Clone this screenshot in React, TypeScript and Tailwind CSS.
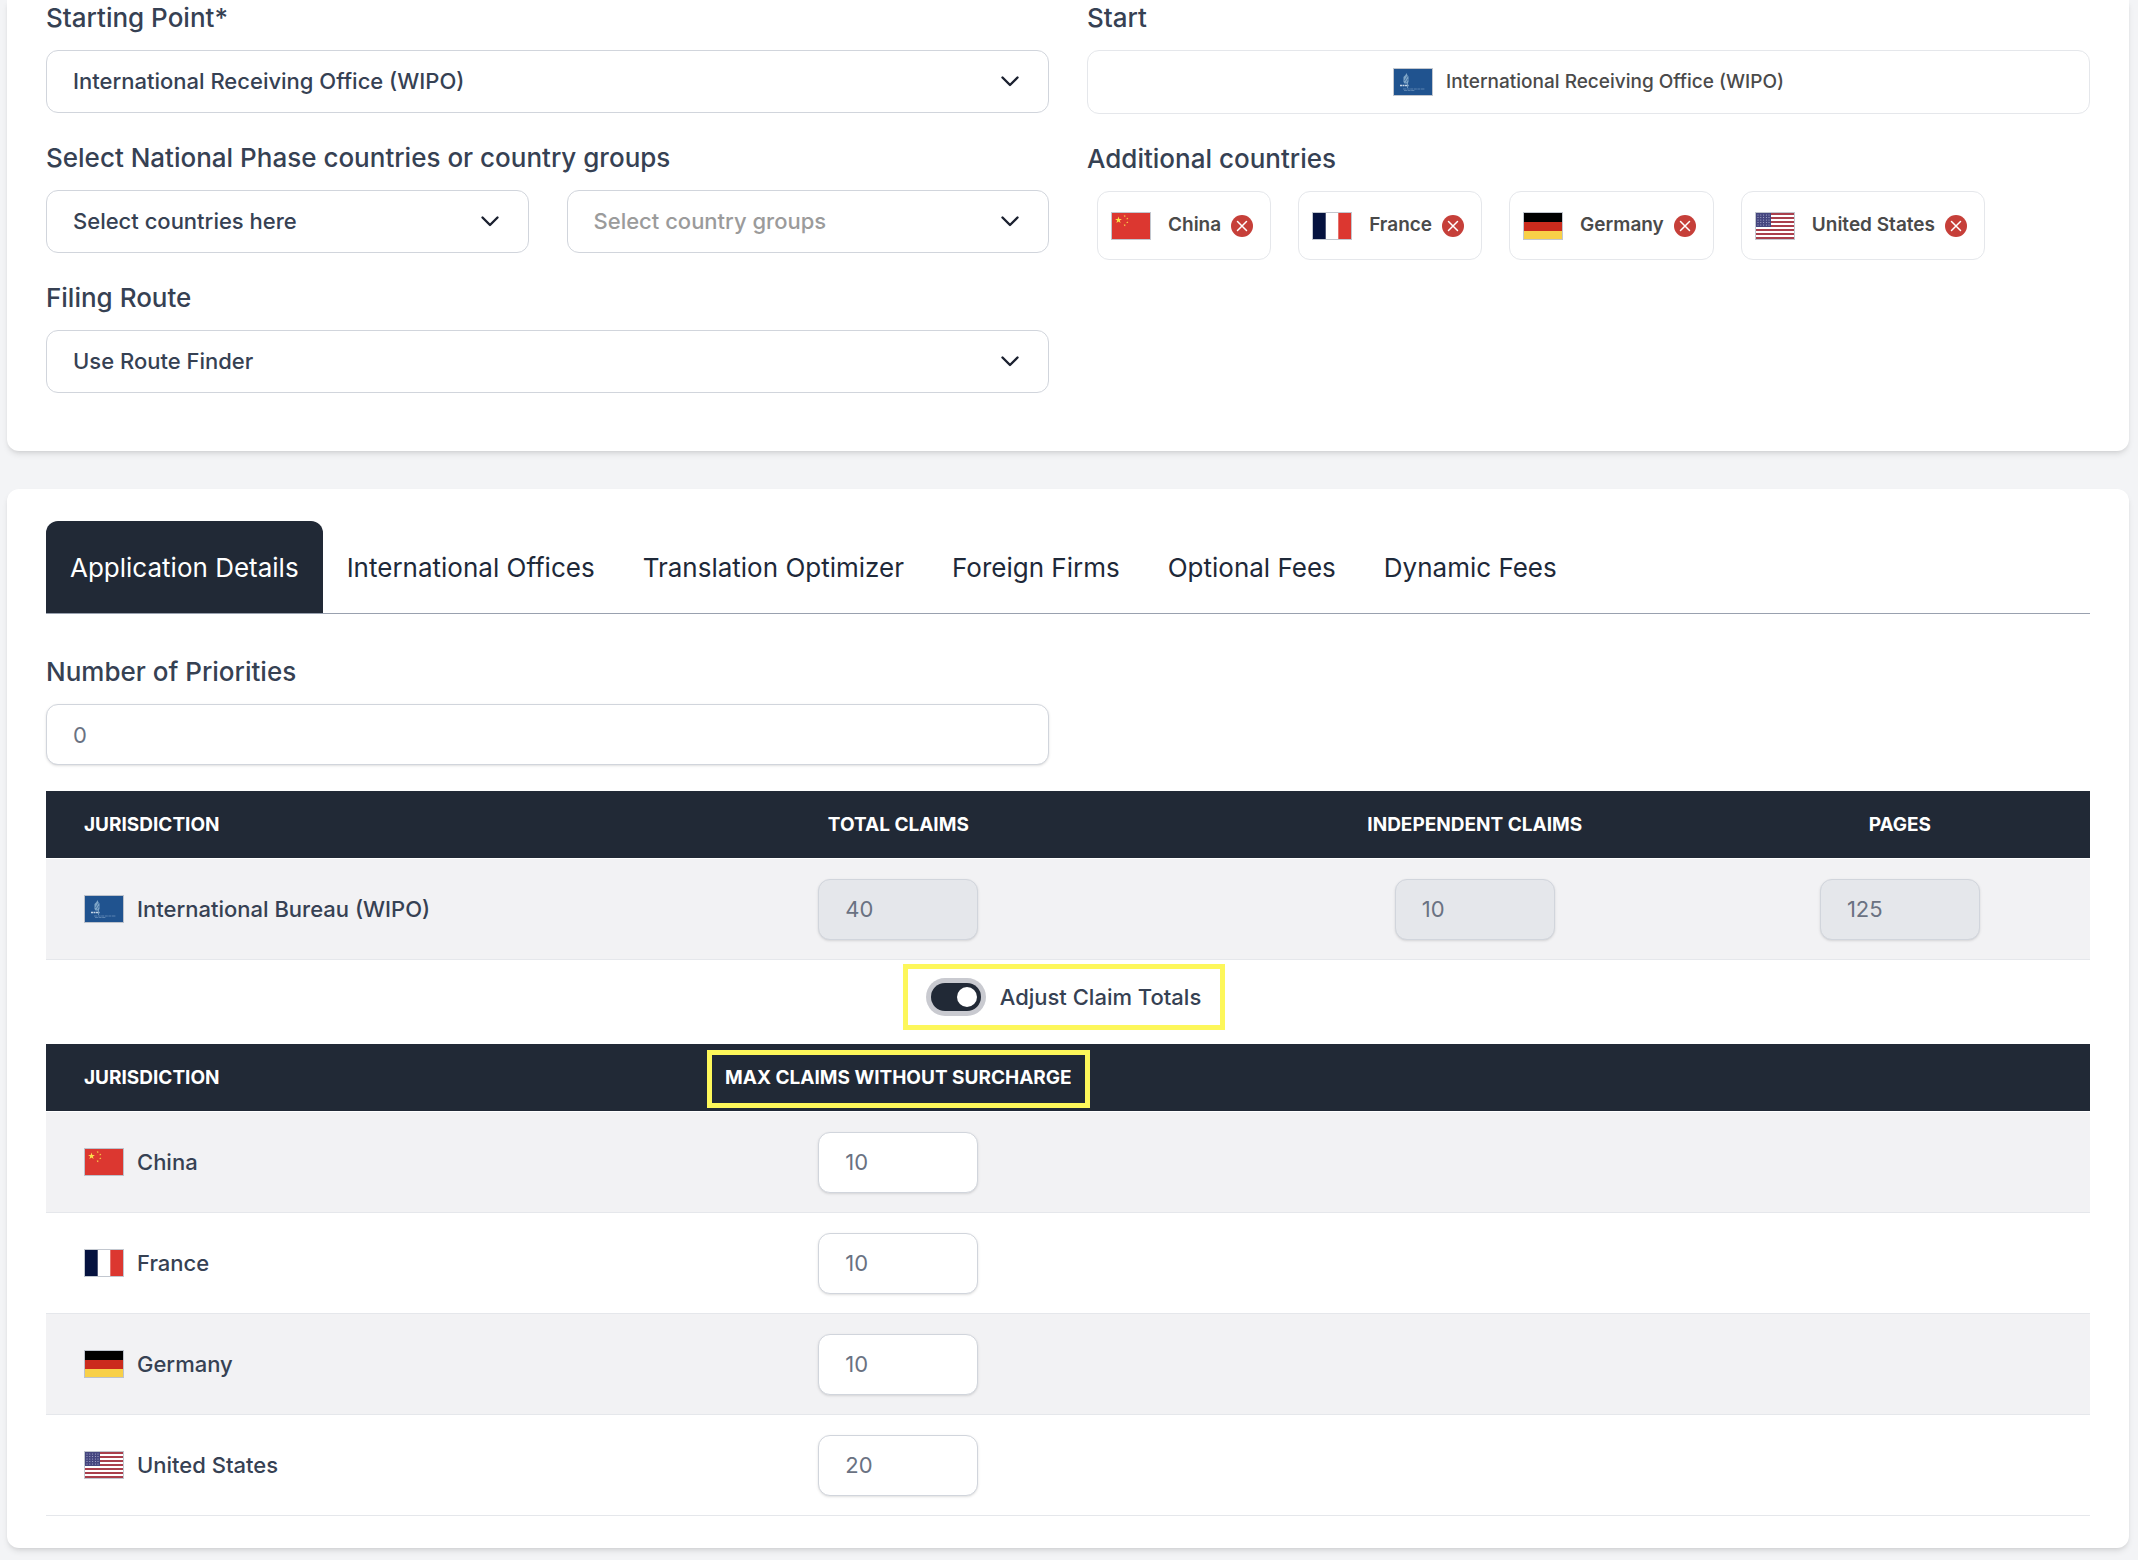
import { useState } from "react";

type CountryCode = "wipo" | "cn" | "fr" | "de" | "us";

interface Country {
  code: CountryCode;
  name: string;
  maxClaims: string;
}

const countries: Country[] = [
  { code: "cn", name: "China", maxClaims: "10" },
  { code: "fr", name: "France", maxClaims: "10" },
  { code: "de", name: "Germany", maxClaims: "10" },
  { code: "us", name: "United States", maxClaims: "20" },
];

const tabs = [
  "Application Details",
  "International Offices",
  "Translation Optimizer",
  "Foreign Firms",
  "Optional Fees",
  "Dynamic Fees",
];

const STAR = "M0 -1L0.225 -0.309L0.951 -0.309L0.363 0.118L0.588 0.809L0 0.382L-0.588 0.809L-0.363 0.118L-0.951 -0.309L-0.225 -0.309Z";

function FlagArt({ code }: { code: CountryCode }) {
  switch (code) {
    case "cn":
      return (
        <>
          <rect width="38" height="26" fill="#dc3730" />
          <g fill="#fbe14b">
            <path d={STAR} transform="translate(6.5 7) scale(3.6)" />
            <path d={STAR} transform="translate(12.7 3) scale(1.2)" />
            <path d={STAR} transform="translate(15.3 5.6) scale(1.2)" />
            <path d={STAR} transform="translate(15.3 9.4) scale(1.2)" />
            <path d={STAR} transform="translate(12.7 12.2) scale(1.2)" />
          </g>
        </>
      );
    case "fr":
      return (
        <>
          <rect width="38" height="26" fill="#fff" />
          <rect width="12.7" height="26" fill="#05123f" />
          <rect x="25.3" width="12.7" height="26" fill="#dc3730" />
        </>
      );
    case "de":
      return (
        <>
          <rect width="38" height="9" fill="#000" />
          <rect y="9" width="38" height="9" fill="#cb2b1d" />
          <rect y="18" width="38" height="8" fill="#f8d048" />
        </>
      );
    case "us":
      return (
        <>
          <rect width="38" height="26" fill="#fff" />
          {[0, 2, 4, 6, 8, 10, 12].map((n) => (
            <rect key={n} y={n * 2} width="38" height="2" fill="#a93f4c" />
          ))}
          <rect width="15" height="14" fill="#45467f" />
          {[2, 4.5, 7, 9.5, 12].map((y) =>
            [2, 4.8, 7.6, 10.4, 13].map((x) => (
              <circle key={`${x}-${y}`} cx={x} cy={y} r="0.55" fill="#b9bad8" />
            ))
          )}
        </>
      );
    default:
      return (
        <>
          <rect width="38" height="26" fill="#20538f" />
          <path d="M9.5 13V8l2-2 1-2 1 2.500 1 1V13l-1 1.500h-3z" fill="#7fa6c8" />
          <path d="M10.500 12l3-5M12 13.500l2-3.500" stroke="#20538f" strokeWidth="0.600" />
          <path d="M6 16.500h8.500" stroke="#c5d6e6" strokeWidth="1.600" strokeDasharray="2 0.500" />
          <path d="M13.500 13v6" stroke="#7fa6c8" strokeWidth="0.800" />
          <path d="M9 20h22M10 21.500h11" stroke="#7297bf" strokeWidth="0.700" strokeDasharray="3 0.600" />
        </>
      );
  }
}

function Flag({ code }: { code: CountryCode }) {
  return (
    <svg
      viewBox="0 0 38 26"
      preserveAspectRatio="none"
      aria-hidden="true"
      className="h-7 w-10 shrink-0 border border-gray-400/60"
    >
      <FlagArt code={code} />
    </svg>
  );
}

interface SelectFieldProps {
  id: string;
  option: string;
  label?: string;
  muted?: boolean;
}

function SelectField({ id, option, label, muted }: SelectFieldProps) {
  return (
    <div className="relative flex-1">
      <select
        id={id}
        aria-label={label}
        className={`block h-[63px] w-full appearance-none rounded-xl border border-gray-300 bg-white px-[26px] text-[22px] font-medium ${
          muted ? "text-[#9b9b9b]" : "text-gray-700"
        }`}
      >
        <option>{option}</option>
      </select>
      <svg
        viewBox="0 0 20 12"
        fill="none"
        aria-hidden="true"
        className="pointer-events-none absolute top-[25px] right-[29px] h-3 w-5"
      >
        <path
          d="M2.500 2.500l7.500 7.500 7.500-7.500"
          stroke="#1b2130"
          strokeWidth="2.400"
          strokeLinecap="round"
          strokeLinejoin="round"
        />
      </svg>
    </div>
  );
}

const labelClass = "block text-[26px] leading-9 font-medium text-gray-700";
const inputClass =
  "block h-[61px] rounded-xl border border-gray-300 px-[26px] text-[22px] text-gray-500 shadow-sm";
const headClass =
  "h-[68px] border-b border-white bg-[#212936] p-0 pt-[2px] text-[19px] font-bold text-white uppercase";
const cellClass = "h-[101px] border-b border-gray-200 p-0";

function Columns() {
  return (
    <colgroup>
      <col className="w-[25%]" />
      <col className="w-[33.4%]" />
      <col className="w-[23%]" />
      <col className="w-[18.6%]" />
    </colgroup>
  );
}

function JurisdictionCell({ code, name }: { code: CountryCode; name: string }) {
  return (
    <td className={cellClass}>
      <div className="flex items-center gap-[13px] pl-[38px] text-[22px] font-medium text-gray-700">
        <Flag code={code} />
        {name}
      </div>
    </td>
  );
}

export default function App() {
  const [activeTab, setActiveTab] = useState(tabs[0]);
  const [selected, setSelected] = useState(countries);
  const [adjustTotals, setAdjustTotals] = useState(true);

  const removeCountry = (code: CountryCode) => {
    setSelected(selected.filter((c) => c.code !== code));
  };

  return (
    <div className="min-h-screen bg-gray-100 pr-[9px] pb-3 pl-[7px] font-[Inter,sans-serif]">
      <section className="grid grid-cols-2 gap-[38px] rounded-b-xl bg-white px-[39px] pb-[58px] shadow-md">
        <div className="space-y-[27px]">
          <div>
            <label htmlFor="starting-point" className={labelClass}>
              Starting Point*
            </label>
            <div className="mt-[14px] flex">
              <SelectField
                id="starting-point"
                option="International Receiving Office (WIPO)"
              />
            </div>
          </div>
          <div>
            <label htmlFor="countries" className={labelClass}>
              Select National Phase countries or country groups
            </label>
            <div className="mt-[14px] flex gap-[38px]">
              <SelectField id="countries" option="Select countries here" />
              <SelectField
                id="country-groups"
                label="Country groups"
                option="Select country groups"
                muted
              />
            </div>
          </div>
          <div>
            <label htmlFor="filing-route" className={labelClass}>
              Filing Route
            </label>
            <div className="mt-[14px] flex">
              <SelectField id="filing-route" option="Use Route Finder" />
            </div>
          </div>
        </div>

        <div className="space-y-[27px]">
          <div>
            <h2 className={labelClass}>Start</h2>
            <div className="mt-[14px] flex h-16 items-center justify-center gap-[13px] rounded-xl border border-gray-200 text-[19px] font-medium text-[#4a4a4a]">
              <Flag code="wipo" />
              International Receiving Office (WIPO)
            </div>
          </div>
          <div>
            <h2 className={labelClass}>Additional countries</h2>
            <ul className="mt-[14px] flex flex-wrap gap-[27px] px-[10px]">
              {selected.map((country) => (
                <li
                  key={country.code}
                  className="flex h-[69px] items-center rounded-xl border border-gray-200 pr-[17px] pl-[13px] text-[19px] font-semibold text-[#4a4a4a]"
                >
                  <Flag code={country.code} />
                  <span className="ml-[17px]">{country.name}</span>
                  <button
                    type="button"
                    aria-label={`Remove ${country.name}`}
                    onClick={() => removeCountry(country.code)}
                    className="ml-[10px]"
                  >
                    <svg viewBox="0 0 22 22" fill="none" className="size-[22px]">
                      <circle cx="11" cy="11" r="11" fill="#c63f39" />
                      <path
                        d="M6.500 6.500l9 9M15.500 6.500l-9 9"
                        stroke="#fff"
                        strokeWidth="1.500"
                        strokeLinecap="round"
                      />
                    </svg>
                  </button>
                </li>
              ))}
            </ul>
          </div>
        </div>
      </section>

      <section className="mt-[38px] rounded-xl bg-white px-[39px] py-8 shadow-md">
        <div role="tablist" className="flex border-b border-gray-400">
          {tabs.map((tab) => (
            <button
              key={tab}
              type="button"
              role="tab"
              aria-selected={tab === activeTab}
              onClick={() => setActiveTab(tab)}
              className={`h-[92px] rounded-t-xl px-6 text-[26px] ${
                tab === activeTab ? "bg-[#212936] text-white" : "text-gray-800"
              }`}
            >
              {tab}
            </button>
          ))}
        </div>

        <div className="mt-10 grid grid-cols-2 gap-[38px]">
          <div>
            <label htmlFor="priorities" className={labelClass}>
              Number of Priorities
            </label>
            <input
              id="priorities"
              type="text"
              defaultValue="0"
              className={`${inputClass} mt-[14px] w-full bg-white`}
            />
          </div>
        </div>

        <table className="mt-[26px] w-full table-fixed border-separate border-spacing-0">
          <Columns />
          <thead>
            <tr>
              <th className={`${headClass} text-left`}>
                <span className="pl-[38px]">Jurisdiction</span>
              </th>
              <th className={headClass}>Total Claims</th>
              <th className={headClass}>Independent Claims</th>
              <th className={headClass}>Pages</th>
            </tr>
          </thead>
          <tbody>
            <tr className="bg-[#f2f2f4]">
              <JurisdictionCell code="wipo" name="International Bureau (WIPO)" />
              {[
                ["Total claims", "40"],
                ["Independent claims", "10"],
                ["Pages", "125"],
              ].map(([label, value]) => (
                <td key={label} className={cellClass}>
                  <input
                    type="text"
                    aria-label={label}
                    defaultValue={value}
                    disabled
                    className={`${inputClass} mx-auto w-40 bg-gray-200`}
                  />
                </td>
              ))}
            </tr>
          </tbody>
        </table>

        <div className="flex justify-center pt-1 pr-2 pb-[14px]">
          <label className="flex h-[66px] items-center gap-[19px] border-5 border-[#fdf75a] pr-[19px] pl-[23px] text-[22px] font-medium text-gray-700">
            <input
              type="checkbox"
              checked={adjustTotals}
              onChange={(e) => setAdjustTotals(e.target.checked)}
              className="flex h-7 w-[50px] appearance-none items-center rounded-full bg-gray-300 p-1 ring-5 ring-[#c9cad0] before:size-5 before:rounded-full before:bg-white checked:justify-end checked:bg-[#212936]"
            />
            Adjust Claim Totals
          </label>
        </div>

        <table className="w-full table-fixed border-separate border-spacing-0">
          <Columns />
          <thead>
            <tr>
              <th className={`${headClass} text-left`}>
                <span className="pl-[38px]">Jurisdiction</span>
              </th>
              <th className={headClass}>
                <span className="inline-flex h-[58px] items-center border-5 border-[#fdf75a] px-[13px] align-middle">
                  Max Claims Without Surcharge
                </span>
              </th>
              <td className={headClass} colSpan={2} />
            </tr>
          </thead>
          <tbody>
            {selected.map((country) => (
              <tr key={country.code} className="odd:bg-[#f2f2f4]">
                <JurisdictionCell code={country.code} name={country.name} />
                <td className={cellClass}>
                  <input
                    type="text"
                    aria-label={`Max claims for ${country.name}`}
                    defaultValue={country.maxClaims}
                    className={`${inputClass} mx-auto w-40 bg-white`}
                  />
                </td>
                <td className={cellClass} colSpan={2} />
              </tr>
            ))}
          </tbody>
        </table>
      </section>
    </div>
  );
}
